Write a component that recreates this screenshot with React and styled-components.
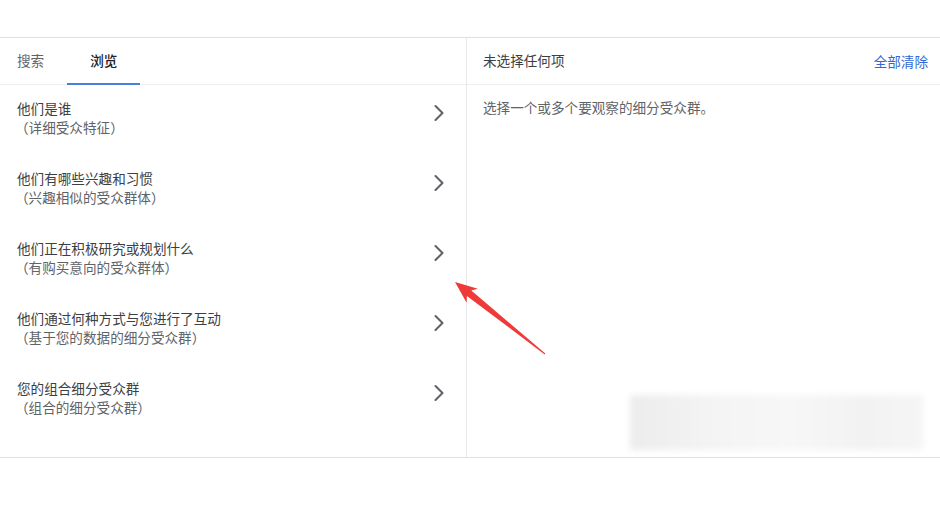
import styled, { createGlobalStyle } from "styled-components";
import { ChevronRight } from "lucide-react";

const GlobalStyle = createGlobalStyle`
  body {
    margin: 0;
    background: #fff;
    font-family: "Noto Sans CJK SC", "Noto Sans", Roboto, sans-serif;
  }
`;

const Page = styled.div`
  position: relative;
  width: 940px;
  height: 507px;
  padding-top: 37px;
  box-sizing: border-box;
`;

const Panels = styled.div`
  display: flex;
  height: 421px;
  border-top: 1px solid #e0e0e0;
  border-bottom: 1px solid #e0e0e0;
  box-sizing: border-box;
`;

const LeftPane = styled.div`
  width: 466px;
  border-right: 1px solid #e8e8e8;
  display: flex;
  flex-direction: column;
`;

const RightPane = styled.div`
  flex: 1;
  display: flex;
  flex-direction: column;
`;

const Header = styled.div`
  height: 46px;
  border-bottom: 1px solid #eeeeee;
  display: flex;
  align-items: stretch;
  box-sizing: content-box;
`;

const Tab = styled.div`
  display: flex;
  align-items: center;
  padding: ${(p) => (p.first ? "0 23px 2px 17px" : "0 23px 2px")};
  font-size: 13.6px;
  color: ${(p) => (p.active ? "#202124" : "#5f6368")};
  font-weight: ${(p) => (p.active ? 500 : 400)};
  border-bottom: 2px solid ${(p) => (p.active ? "#4a7fe0" : "transparent")};
  margin-bottom: -1px;
`;

const Row = styled.div`
  height: 70px;
  box-sizing: border-box;
  padding: 13px 13px 0 17px;
  display: flex;
  justify-content: space-between;
  align-items: flex-start;
`;

const RowText = styled.div`
  display: flex;
  flex-direction: column;
`;

const Title = styled.span`
  font-size: 13.6px;
  line-height: 20px;
  color: #3c4043;
`;

const Subtitle = styled.span`
  font-size: 13.6px;
  line-height: 19px;
  color: #5f6368;
  margin-left: -2px;
`;

const Chevron = styled(ChevronRight)`
  color: #5f6368;
  margin-top: 1px;
`;

const RightHeader = styled(Header)`
  justify-content: space-between;
  align-items: center;
  padding: 0 12px 3px 16px;
  height: 43px;
`;

const HeaderTitle = styled.span`
  font-size: 13.6px;
  color: #3c4043;
`;

const ClearLink = styled.span`
  font-size: 13.6px;
  color: #3367d6;
  margin-top: 2px;
`;

const Hint = styled.div`
  padding: 12px 16px 0;
  font-size: 13.6px;
  line-height: 20px;
  color: #5f6368;
`;

const Blurred = styled.div`
  margin: auto 17px 7px auto;
  width: 293px;
  height: 55px;
  background: linear-gradient(90deg, #ececec 0%, #f4f4f4 30%, #f7f7f7 55%, #f2f2f2 80%, #f5f5f5 100%);
  filter: blur(3px);
`;

const Arrow = styled.svg`
  position: absolute;
  left: 0;
  top: 0;
  pointer-events: none;
`;

const items = [
  ["他们是谁", "（详细受众特征）"],
  ["他们有哪些兴趣和习惯", "（兴趣相似的受众群体）"],
  ["他们正在积极研究或规划什么", "（有购买意向的受众群体）"],
  ["他们通过何种方式与您进行了互动", "（基于您的数据的细分受众群）"],
  ["您的组合细分受众群", "（组合的细分受众群）"],
];

export default function App() {
  return (
    <Page>
      <GlobalStyle />
      <Panels>
        <LeftPane>
          <Header>
            <Tab first>搜索</Tab>
            <Tab active>浏览</Tab>
          </Header>
          {items.map(([t, s]) => (
            <Row key={t}>
              <RowText>
                <Title>{t}</Title>
                <Subtitle>{s}</Subtitle>
              </RowText>
              <Chevron size={28} strokeWidth={1.8} />
            </Row>
          ))}
        </LeftPane>
        <RightPane>
          <RightHeader>
            <HeaderTitle>未选择任何项</HeaderTitle>
            <ClearLink>全部清除</ClearLink>
          </RightHeader>
          <Hint>选择一个或多个要观察的细分受众群。</Hint>
          <Blurred />
        </RightPane>
      </Panels>
      <Arrow width="940" height="507" viewBox="0 0 940 507">
        <polygon
          points="455,282 477.8,288.7 471.3,290.5 545.3,353.6 544.7,354.4 466.9,296 466.6,302.8"
          fill="#ef3a3a"
        />
      </Arrow>
    </Page>
  );
}
